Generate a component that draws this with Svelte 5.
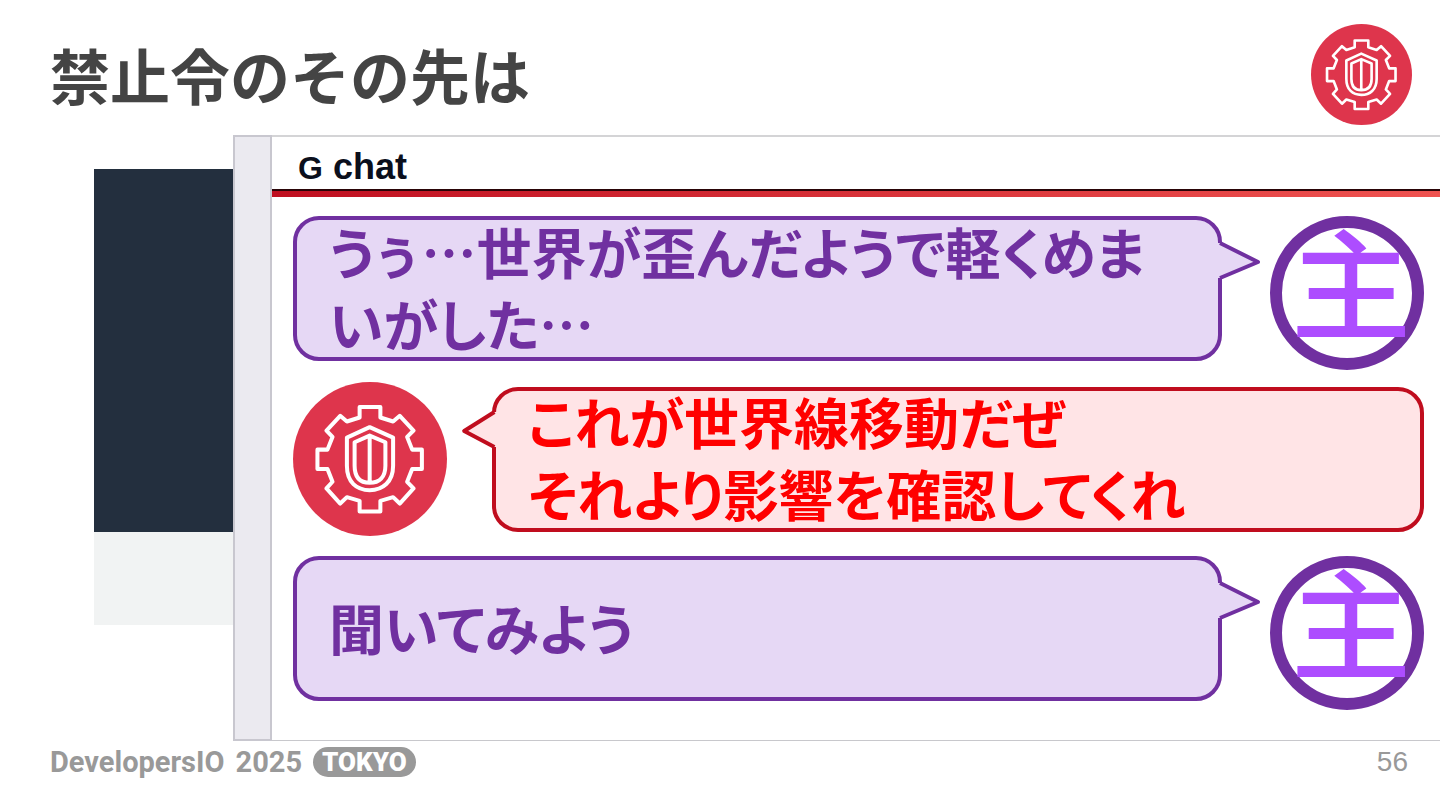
<script>
  const messages = [
    { who: 'owner', lines: ['うぅ…世界が歪んだようで軽くめま', 'いがした…'] },
    { who: 'guard', lines: ['これが世界線移動だぜ', 'それより影響を確認してくれ'] },
    { who: 'owner', lines: ['聞いてみよう'] },
  ];
</script>

{#snippet gear()}
  <svg class="gear" viewBox="42 36 460 460" role="img" aria-label="GuardDuty">
    <circle cx="272" cy="266" r="230" fill="#de354c" />
    <g fill="none" stroke="#fff" stroke-width="12" stroke-linejoin="round">
      <path d="M241 111H303V142L341 154L361 137L402 181L383 200L398 238H427V296H398L383 334L402 354L361 399L341 380L303 391V423H241V391L203 380L183 399L142 354L160 334L145 296H115V238H145L160 200L142 181L183 137L203 154L241 142Z" />
      <path d="M271 171L341 202V286C341 335 310 359 271 359C232 359 203 335 203 286V202Z" />
      <path d="M271 196L318 216V286C318 320 300 337 271 337C242 337 226 320 226 286V216ZM271 196V337" />
    </g>
  </svg>
{/snippet}

<div class="slide">
  <header>
    <h1>禁止令のその先は</h1>
    <div class="badge">{@render gear()}</div>
  </header>

  <main>
    <div class="backdrop"><div class="dark"></div><div class="light"></div></div>
    <div class="rail"></div>
    <section class="chat">
      <h2><span>G</span> chat</h2>
      <div class="bar"></div>
      <ul>
        {#each messages as m}
          <li class={m.who}>
            {#if m.who === 'guard'}<div class="avatar">{@render gear()}</div>{/if}
            <div class="bubble">
              <p>{#each m.lines as line, i}{#if i}<br />{/if}{line}{/each}</p>
              <svg class="tail" viewBox="0 0 44 44" preserveAspectRatio="none" aria-hidden="true">
                <path class="fill" d="M-3 3H4L40 22L4 38H-3Z" />
                <path class="edge" d="M2 3L40 22L2 38" />
              </svg>
            </div>
            {#if m.who === 'owner'}<div class="avatar ring"><span>主</span></div>{/if}
          </li>
        {/each}
      </ul>
    </section>
  </main>

  <footer>
    <div class="brand"><span>DevelopersIO</span><span>2025</span><b>TOKYO</b></div>
    <div class="page">56</div>
  </footer>
</div>

<style>
  :global(body) { margin: 0; background: #fff; }
  .slide {
    min-height: 100vh;
    display: flex;
    flex-direction: column;
    overflow: hidden;
    font-family: "Noto Sans CJK JP", sans-serif;
  }
  header {
    height: 135px;
    display: flex;
    justify-content: space-between;
    align-items: center;
    box-sizing: border-box;
    padding: 13px 28px 0 50px;
  }
  h1 { margin: 0; font-size: 60px; line-height: 72px; font-weight: 700; color: #444; }
  .badge { width: 101px; height: 101px; }
  .gear { display: block; width: 100%; height: 100%; }
  main { flex: 1; display: flex; padding-left: 94px; }
  .backdrop { flex: none; width: 139px; padding-top: 34px; }
  .dark { height: 363px; background: #232f3e; }
  .light { height: 93px; background: #f1f3f3; }
  .rail { flex: none; width: 35px; border: 2px solid #c8c7cf; background: #ebeaf0; }
  .chat {
    flex: 1;
    min-width: 0;
    border-top: 2px solid #d4d4d6;
    border-bottom: 1px solid #c8c8cc;
    background: #fff;
  }
  h2 {
    margin: 0;
    padding: 8px 0 0 26px;
    height: 44px;
    font: 700 36px/44px "Liberation Sans", Arial, sans-serif;
    color: #0b0f1c;
  }
  h2 span { font-size: 32px; }
  .bar {
    height: 6px;
    border-top: 2px solid #2a0508;
    background: linear-gradient(90deg, #bf0f20, #ef5350);
  }
  ul {
    list-style: none;
    margin: 0;
    padding: 19px 16px 28px 21px;
    display: flex;
    flex-direction: column;
    gap: 12px;
  }
  li { display: flex; gap: 48px; align-items: flex-start; }
  li:last-child { margin-top: 8px; }
  .guard { gap: 45px; align-items: center; }
  .avatar { flex: none; width: 154px; height: 154px; }
  .ring {
    box-sizing: border-box;
    border: 12px solid #7030a0;
    border-radius: 50%;
    display: flex;
    justify-content: center;
    align-items: center;
    padding: 0 0 28px 8px;
  }
  .ring span { font-size: 120px; line-height: 130px; font-weight: 500; color: #ad4dff; }
  .bubble {
    position: relative;
    flex: 1;
    min-width: 0;
    box-sizing: border-box;
    height: 145px;
    display: flex;
    align-items: center;
    padding: 0 0 6px 32px;
    border: 4px solid #7030a0;
    border-radius: 26px;
    background: #e6d8f5;
    color: #7030a0;
  }
  .guard .bubble { border-color: #c00d1e; background: #ffe4e6; color: #f00; }
  p {
    margin: 0;
    font-size: 55px;
    line-height: 72px;
    font-weight: 700;
    white-space: nowrap;
    font-feature-settings: "palt";
  }
  .tail { position: absolute; top: 20px; left: 100%; width: 44px; height: 44px; overflow: visible; }
  .guard .tail { top: 18px; left: auto; right: 100%; width: 35px; transform: scaleX(-1); }
  .fill { fill: #e6d8f5; }
  .edge {
    fill: none;
    stroke: #7030a0;
    stroke-width: 4;
    stroke-linejoin: round;
    vector-effect: non-scaling-stroke;
  }
  .guard .fill { fill: #ffe4e6; }
  .guard .edge { stroke: #c00d1e; }
  footer {
    height: 69px;
    display: flex;
    justify-content: space-between;
    align-items: flex-start;
    box-sizing: border-box;
    padding: 6px 32px 0 50px;
    color: #999;
  }
  .brand { display: flex; gap: 11px; font: 700 29px/30px Roboto, sans-serif; }
  b { padding: 0 9px; border-radius: 15px; background: #999; color: #fff; font-size: 26px; }
  .page { font: 28px/30px "Liberation Sans", Arial, sans-serif; }
</style>
